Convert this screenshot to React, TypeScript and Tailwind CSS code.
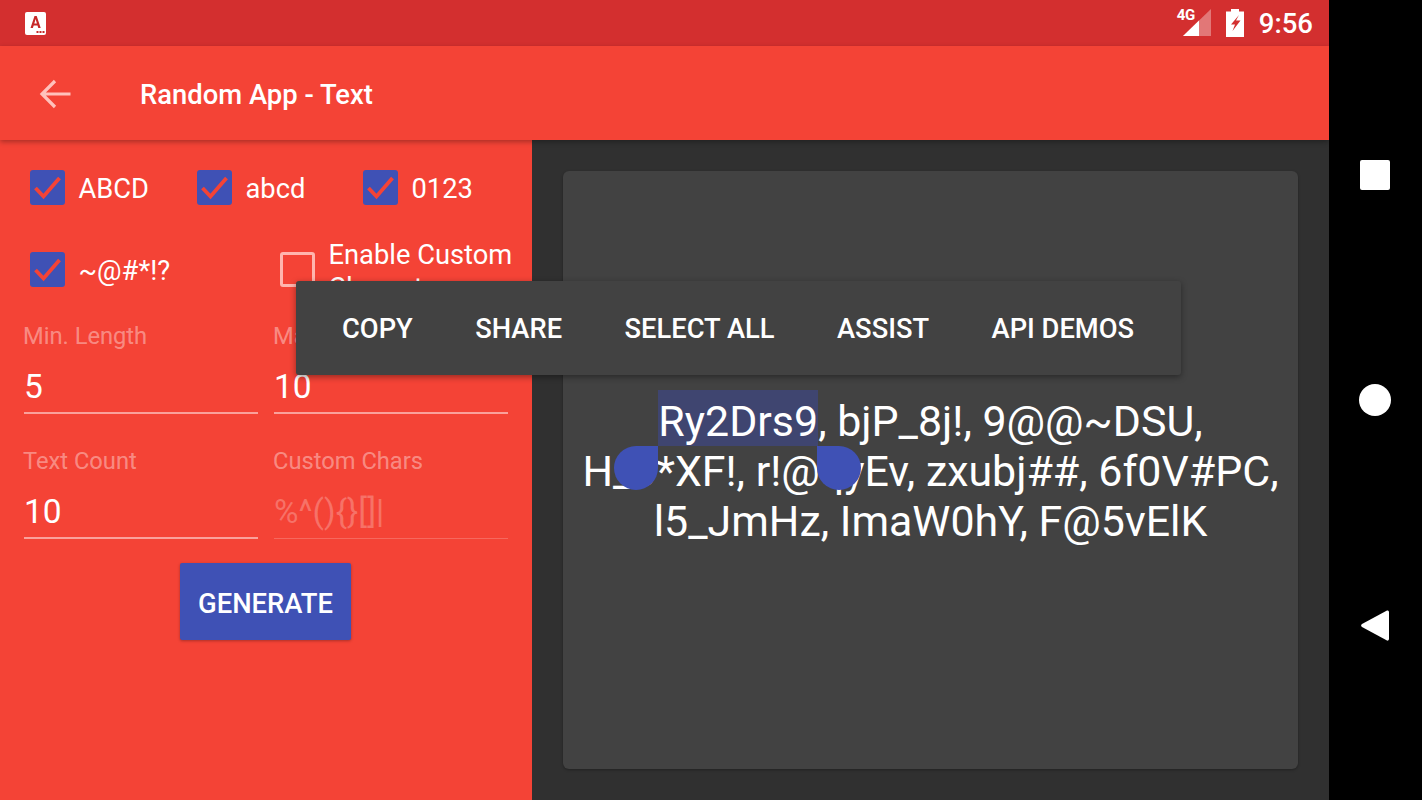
import React from "react";

const font = { fontFamily: "Roboto, sans-serif" };

function Check({ label, className = "" }: { label: string; className?: string }) {
  return (
    <div className={`flex items-center gap-[13.5px] ${className}`}>
      <div className="w-[35px] h-[35px] rounded-[3px] bg-[#3f51b5] flex items-center justify-center shrink-0">
        <svg width="35" height="35" viewBox="0 0 35 35" fill="none">
          <path d="M5.5 18L13.5 26.5L29.5 8" stroke="#f44336" strokeWidth="3.8" />
        </svg>
      </div>
      <span className="text-[27.3px] leading-[35px] text-white translate-y-[2px]">{label}</span>
    </div>
  );
}

function Field({ label, value, dim = false }: { label: string; value: string; dim?: boolean }) {
  return (
    <div className="w-[234px]">
      <div className="ml-[-1px] text-[23.7px] leading-[30px] text-white/40">{label}</div>
      <div className={`mt-[16px] h-[40px] text-[33.5px] leading-[40px] ${dim ? "text-white/25" : "text-white"}`}>{value}</div>
      <div className={dim ? "mt-[6px] h-[1px] bg-white/20" : "mt-[5px] h-[2px] bg-white/50"} />
    </div>
  );
}

export default function App() {
  return (
    <div className="relative flex w-[1422px] h-[800px] overflow-hidden bg-black" style={font}>
      <div className="flex flex-col w-[1329px] h-full">
        {/* status bar */}
        <div className="h-[46px] shrink-0 bg-[#d32f2f] flex items-center pl-[25px] pr-[16px]">
          <svg width="21" height="23" viewBox="0 0 21 23">
            <rect x="0" y="0" width="21" height="23" rx="2" fill="#fff" />
            <path d="M5.5 16L9.5 4h2.2l4 12h-2.4l-.8-2.6H8.7L7.9 16zM9.3 11.4h2.6L10.6 7z" fill="#c62828" />
            <rect x="11.5" y="19" width="2" height="2" fill="#c62828" />
            <rect x="14.5" y="19" width="2" height="2" fill="#c62828" />
            <rect x="17.5" y="19" width="2" height="2" fill="#c62828" />
          </svg>
          <div className="flex-1" />
          <div className="relative w-[36px] h-[28px]">
            <svg width="36" height="28" viewBox="0 0 36 28" className="absolute left-0 top-0">
              <path d="M7 27L35 0V27z" fill="#fff" fillOpacity="0.35" />
              <path d="M7 27L23 11.5V27z" fill="#fff" />
            </svg>
            <span className="absolute left-[1px] top-[-2px] text-[15px] leading-[16px] font-bold text-white tracking-[-0.5px]">4G</span>
          </div>
          <svg width="18" height="28" viewBox="0 0 18 28" className="ml-[14px]">
            <path d="M5 0h8v2.5h5V28H0V2.5h5z" fill="#fff" />
            <path d="M13 6L5 15.5h4L6.5 22l8-10.5H10z" fill="#d32f2f" />
          </svg>
          <span className="ml-[15px] text-[27.5px] leading-[32px] font-medium text-white translate-y-[1px]">9:56</span>
        </div>
        {/* toolbar */}
        <div className="h-[94px] shrink-0 bg-[#f44336] flex items-center shadow-[0_2px_5px_rgba(0,0,0,0.3)] z-10">
          <svg width="32" height="32" viewBox="0 0 32 32" fill="none" className="ml-[39px] translate-y-[1px]">
            <path d="M31.5 16H3M16 3L3 16L16 29" stroke="#ffc1bb" strokeWidth="3.2" />
          </svg>
          <span className="ml-[69px] text-[27.4px] leading-[32px] font-medium text-white translate-y-[2px]">Random App - Text</span>
        </div>
        <div className="flex flex-1 min-h-0">
          {/* left panel */}
          <div className="w-[532px] shrink-0 bg-[#f44336] flex flex-col">
            <div className="flex pl-[30px] pt-[30px]">
              <Check label="ABCD" className="w-[167px]" />
              <Check label="abcd" className="w-[166px]" />
              <Check label="0123" />
            </div>
            <div className="flex items-start pl-[30px] pt-[47px] h-[116px]">
              <Check label="~@#*!?" className="w-[250px]" />
              <div className="flex items-start gap-[13.5px] h-[35px]">
                <div className="w-[35px] h-[35px] rounded-[3px] border-[3px] border-[#ffb5ae] shrink-0" />
                <span className="text-[27.3px] leading-[33px] text-white mt-[-13px]">
                  Enable Custom
                  <br />
                  Characters
                </span>
              </div>
            </div>
            <div className="grid grid-cols-[234px_234px] gap-x-[16px] pl-[24px] gap-y-[32px]">
              <Field label="Min. Length" value="5" />
              <Field label="Max. Length" value="10" />
              <Field label="Text Count" value="10" />
              <Field label="Custom Chars" value="%^(){}[]|" dim />
            </div>
            <div className="flex justify-center mt-[24px] pr-[1px]">
              <div className="w-[171px] h-[77px] bg-[#3f51b5] rounded-[2px] flex items-center justify-center text-[27.4px] font-medium text-white shadow-[0_1px_3px_rgba(0,0,0,0.3)]">
                <span className="translate-y-[3px]">GENERATE</span>
              </div>
            </div>
          </div>
          {/* right panel */}
          <div className="flex-1 bg-[#303030] p-[31px]">
            <div className="h-full rounded-[6px] bg-[#424242] flex flex-col items-center pt-[225px] shadow-[0_1px_3px_rgba(0,0,0,0.3)]">
              <p className="w-[735px] text-center text-[42.9px] leading-[50px] text-white">
                <span className="bg-[#3f4570] pt-[6px]">Ry2Drs9</span>, bjP_8j!, 9@@~DSU,
                <br />
                H_3*XF!, r!@qyEv, zxubj##, 6f0V#PC,
                <br />
                l5_JmHz, ImaW0hY, F@5vElK
              </p>
            </div>
          </div>
        </div>
      </div>
      {/* nav bar */}
      <div className="w-[93px] h-full bg-black flex flex-col items-center">
        <div className="mt-[160px] w-[30px] h-[30px] rounded-[2px] bg-white mr-[1px]" />
        <div className="mt-[194px] w-[32px] h-[32px] rounded-full bg-white mr-[1px]" />
        <svg width="30" height="33" viewBox="0 0 30 33" className="mt-[193px] mr-[1px]">
          <path d="M27 1.5C28 1.2 29 2 29 3V30C29 31 28 32 27 31.5L2 18C0.8 17.3 0.8 15.8 2 15z" fill="#fff" />
        </svg>
      </div>
      {/* selection handles */}
      <div className="absolute left-[614px] top-[446px] w-[44px] h-[44px] rounded-[22px_0_22px_22px] bg-[#3f51b5]" />
      <div className="absolute left-[817px] top-[446px] w-[44px] h-[44px] rounded-[0_22px_22px_22px] bg-[#3f51b5]" />
      {/* floating text menu */}
      <div className="absolute left-[296px] top-[281px] w-[885px] h-[94px] rounded-[3px] bg-[#424242] shadow-[0_2px_6px_rgba(0,0,0,0.4)] flex items-center pl-[46px] gap-[62.5px] text-[27.3px] font-medium text-white">
        <span className="translate-y-[1px]">COPY</span>
        <span className="translate-y-[1px]">SHARE</span>
        <span className="translate-y-[1px]">SELECT ALL</span>
        <span className="translate-y-[1px]">ASSIST</span>
        <span className="translate-y-[1px]">API DEMOS</span>
      </div>
    </div>
  );
}
